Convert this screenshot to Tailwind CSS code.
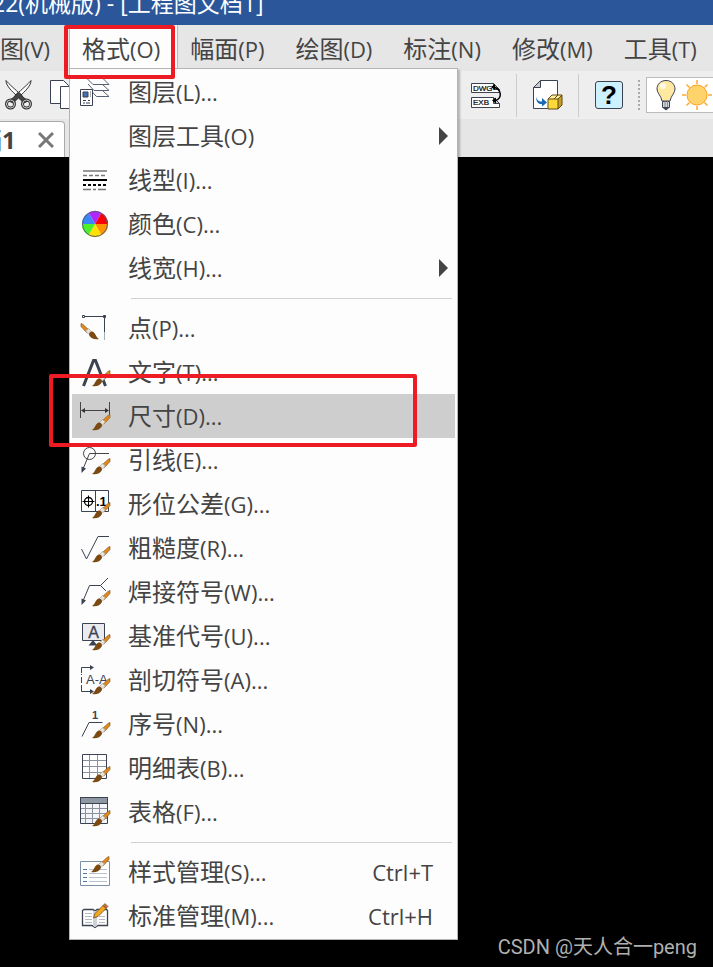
<!DOCTYPE html>
<html lang="zh-CN">
<head>
    <meta charset="UTF-8">
    <meta name="viewport" content="width=device-width, initial-scale=1.0">
    <title>工程图文档1</title>
    <script src="https://cdn.jsdelivr.net/npm/@tailwindcss/browser@4"></script>
</head>
<body class="bg-black">
    <!-- 共用图标 -->
    <svg class="hidden">
        <symbol id="brush" viewBox="0 0 32 32">
            <path d="M21.500 21.500L28 15.500L30 14.500V17.500L24.500 23.500z" fill="#e08a1e" stroke="#8a5a20" stroke-width=".7"/>
            <path d="M19.500 22.500L22.500 19.500L25.500 22L22.500 25z" fill="#e4e4e4" stroke="#a89070" stroke-width=".6"/>
            <path d="M12 30C15 28.500 15 24.500 18.500 22.500C21 22.500 22 24 22 26C20.500 29.500 16 31 12 30z" fill="#7a4a12"/>
        </symbol>
    </svg>

    <div class="relative min-h-screen overflow-hidden font-['Open_Sans','Noto_Sans_CJK_SC',sans-serif] text-2xl leading-8 text-[#444]">
        <!-- 标题栏 -->
        <header class="flex h-[25px] items-end overflow-hidden bg-[#2b579a] text-white">
            <h1 class="-ml-2 whitespace-nowrap pb-1.5 text-[23px]">22(机械版) - [工程图文档1]</h1>
        </header>

        <!-- 菜单栏 -->
        <nav class="flex h-[46px] items-start whitespace-nowrap bg-[#e6e6e6]">
            <button class="-ml-9 h-[46px] shrink-0 pl-3 pr-[19px] pt-0.5">视图<span class="text-[22px]">(V)</span></button>
            <div class="relative shrink-0">
                <button class="h-[46px] border-x border-[#bbb] bg-[#fdfdfd] pl-3 pr-[17px] pt-0.5">格式<span class="text-[22px]">(O)</span></button>

                <!-- 格式下拉菜单 -->
                <ul class="absolute left-0 top-[43px] z-10 w-[389px] border border-[#b4b4b4] bg-[#fdfdfd] px-0.5 py-px shadow-[2px_2px_2px_rgba(0,0,0,0.25)]">
                    <li><button class="flex h-11 w-full items-center gap-4 pl-2 pr-[22px] text-left">
                        <svg class="size-8" viewBox="0 0 32 32" fill="none" stroke="#3b4252">
                            <path d="M7.500 3L13 8.500H29L22.500 2M8 8L14 14.500H29L22.500 8.500M10 13.500L16.500 20.500H29L22.500 14.500" stroke="#596273"/>
                            <path d="M.5 13.500h12v16H.500z" fill="#fff"/>
                            <path d="M3 16h5v5H3z" fill="#3f73b5"/><path d="M10.500 15v6" stroke="#aaa"/>
                            <path d="M3 24.500h3m2 0h2M3 27h2m1 0h4"/>
                        </svg>
                        <span>图层<span class="text-[22px]">(L)...</span></span>
                    </button></li>
                    <li><button class="flex h-11 w-full items-center gap-4 pl-2 pr-[7px] text-left">
                        <span class="size-8"></span>
                        <span>图层工具<span class="text-[22px]">(O)</span></span>
                        <svg class="ml-auto h-[18px] w-[9px]" viewBox="0 0 9 18"><path d="M0 0l9 9l-9 9z" fill="#444"/></svg>
                    </button></li>
                    <li><button class="flex h-11 w-full items-center gap-4 pl-2 pr-[22px] text-left">
                        <svg class="size-8" viewBox="0 0 32 32" fill="none" stroke="#777" stroke-width="1.500">
                            <path d="M3 7h24"/><path d="M3 11.500h24" stroke-dasharray="4 2"/>
                            <path d="M3 16h24" stroke="#000" stroke-width="2"/>
                            <path d="M3 21h24" stroke="#000" stroke-width="2" stroke-dasharray="3 2"/>
                            <path d="M3 25.500h24" stroke-dasharray="8 2 3 2"/>
                        </svg>
                        <span>线型<span class="text-[22px]">(I)...</span></span>
                    </button></li>
                    <li><button class="flex h-11 w-full items-center gap-4 pl-2 pr-[22px] text-left">
                        <svg class="size-8" viewBox="0 0 32 32">
                            <path d="M15 16L8.500 4.700A13 13 0 0 1 21.500 4.700z" fill="#b026ff"/>
                            <path d="M15 16L21.500 4.700A13 13 0 0 1 28 16z" fill="#fb0007"/>
                            <path d="M15 16H28A13 13 0 0 1 21.500 27.300z" fill="#ff9300"/>
                            <path d="M15 16L21.500 27.300A13 13 0 0 1 8.500 27.300z" fill="#ffe100"/>
                            <path d="M15 16L8.500 27.300A13 13 0 0 1 2 16z" fill="#4cf02c"/>
                            <path d="M15 16H2A13 13 0 0 1 8.500 4.700z" fill="#3b86f7"/>
                            <circle cx="15" cy="16" r="12.500" fill="none" stroke="#5a6070"/>
                        </svg>
                        <span>颜色<span class="text-[22px]">(C)...</span></span>
                    </button></li>
                    <li><button class="flex h-11 w-full items-center gap-4 pl-2 pr-[7px] text-left">
                        <span class="size-8"></span>
                        <span>线宽<span class="text-[22px]">(H)...</span></span>
                        <svg class="ml-auto h-[18px] w-[9px]" viewBox="0 0 9 18"><path d="M0 0l9 9l-9 9z" fill="#444"/></svg>
                    </button></li>

                    <li class="flex h-4 items-center pl-[59px] pr-[3px]"><hr class="w-full border-[#d0d0d0]"></li>

                    <li><button class="flex h-11 w-full items-center gap-4 pl-2 pr-[22px] text-left">
                        <svg class="size-8" viewBox="0 0 32 32" fill="none" stroke="#3b4252">
                            <path d="M5 4.500h19.500V20"/><path d="M24.500 20v8" stroke="#a8acb4"/>
                            <path d="M2.500 3.500h2v2h-2z"/><path d="M23.500 3.500h2v2h-2z" fill="#3b4252"/>
                            <g transform="matrix(-1 0 0 1 31 -3)" stroke="none"><use href="#brush" width="32" height="32"/></g>
                        </svg>
                        <span>点<span class="text-[22px]">(P)...</span></span>
                    </button></li>
                    <li><button class="flex h-11 w-full items-center gap-4 pl-2 pr-[22px] text-left">
                        <svg class="size-8" viewBox="0 0 32 32">
                            <path d="M3.500 30L13.500 4.500H15.500L25.500 30M8 20H21" fill="none" stroke="#3b4252" stroke-width="3"/>
                            <use href="#brush" width="32" height="32"/>
                        </svg>
                        <span>文字<span class="text-[22px]">(T)...</span></span>
                    </button></li>
                    <li><button class="flex h-11 w-full items-center gap-4 bg-[#cecece] pl-2 pr-[22px] text-left">
                        <svg class="size-8" viewBox="0 0 32 32">
                            <path d="M.5 2v16M29.500 2v13M2 10.500h26" fill="none" stroke="#444"/>
                            <path d="M1 10.500l4-2.500v5zM29 10.500l-4-2.500v5z" fill="#333"/>
                            <use href="#brush" width="32" height="32"/>
                        </svg>
                        <span>尺寸<span class="text-[22px]">(D)...</span></span>
                    </button></li>
                    <li><button class="flex h-11 w-full items-center gap-4 pl-2 pr-[22px] text-left">
                        <svg class="size-8" viewBox="0 0 32 32">
                            <path d="M29 9.500H9.500L3 25" fill="none" stroke="#444"/>
                            <circle cx="9.500" cy="9.500" r="6" fill="none" stroke="#444"/>
                            <path d="M1.500 29V22.500l4.500 2z" fill="#3b4252"/>
                            <use href="#brush" width="32" height="32"/>
                        </svg>
                        <span>引线<span class="text-[22px]">(E)...</span></span>
                    </button></li>
                    <li><button class="flex h-11 w-full items-center gap-4 pl-2 pr-[22px] text-left">
                        <svg class="size-8" viewBox="0 0 32 32">
                            <path d="M1.500 2.500h27v21h-27zM15.500 2.500v21" fill="#fff" stroke="#3b4252"/>
                            <circle cx="8.500" cy="13.500" r="4" fill="none" stroke="#000" stroke-width="1.300"/>
                            <path d="M2.500 13.500h12M8.500 7.500v12" stroke="#000"/>
                            <text x="16" y="18" font-size="13" font-weight="700" fill="#000" font-family="Liberation Sans">.1</text>
                            <use href="#brush" width="32" height="32"/>
                        </svg>
                        <span>形位公差<span class="text-[22px]">(G)...</span></span>
                    </button></li>
                    <li><button class="flex h-11 w-full items-center gap-4 pl-2 pr-[22px] text-left">
                        <svg class="size-8" viewBox="0 0 32 32">
                            <path d="M1.500 17L6.500 27L18 4.500H29" fill="none" stroke="#3b4252"/>
                            <use href="#brush" width="32" height="32"/>
                        </svg>
                        <span>粗糙度<span class="text-[22px]">(R)...</span></span>
                    </button></li>
                    <li><button class="flex h-11 w-full items-center gap-4 pl-2 pr-[22px] text-left">
                        <svg class="size-8" viewBox="0 0 32 32">
                            <path d="M3 25L9.500 9.500H20.500L28 2M20.500 9.500L26 15" fill="none" stroke="#3b4252"/>
                            <path d="M1.500 29V22.500l4.500 2z" fill="#3b4252"/>
                            <use href="#brush" width="32" height="32"/>
                        </svg>
                        <span>焊接符号<span class="text-[22px]">(W)...</span></span>
                    </button></li>
                    <li><button class="flex h-11 w-full items-center gap-4 pl-2 pr-[22px] text-left">
                        <svg class="size-8" viewBox="0 0 32 32">
                            <path d="M2.500 3.500h22v17h-22z" fill="#e9ebef" stroke="#3b4252"/>
                            <text x="13.500" y="18" text-anchor="middle" font-size="16" fill="#3b4252" stroke="#3b4252" stroke-width=".3" font-family="Liberation Sans">A</text>
                            <path d="M13 20l4.500 5.500h-9z" fill="#3b4252"/>
                            <use href="#brush" width="32" height="32"/>
                        </svg>
                        <span>基准代号<span class="text-[22px]">(U)...</span></span>
                    </button></li>
                    <li><button class="flex h-11 w-full items-center gap-4 pl-2 pr-[22px] text-left">
                        <svg class="size-8" viewBox="0 0 32 32">
                            <path d="M11 3.500H1.500V9M1.500 22v5.500H11" fill="none" stroke="#3b4252"/>
                            <path d="M1.500 10v12" stroke="#3b4252" stroke-dasharray="1 2 6 2"/>
                            <path d="M14 3.500l-4-2.500v5zM14 27.500l-4-2.500v5z" fill="#3b4252"/>
                            <text x="6" y="20" font-size="13" fill="#3b4252" font-family="Liberation Sans">A-A</text>
                            <use href="#brush" width="32" height="32"/>
                        </svg>
                        <span>剖切符号<span class="text-[22px]">(A)...</span></span>
                    </button></li>
                    <li><button class="flex h-11 w-full items-center gap-4 pl-2 pr-[22px] text-left">
                        <svg class="size-8" viewBox="0 0 32 32">
                            <path d="M2 28.500L9 14.500H22.500" fill="none" stroke="#3b4252"/>
                            <text x="15" y="11" text-anchor="middle" font-size="11" font-weight="700" fill="#3b4252" font-family="Liberation Sans">1</text>
                            <use href="#brush" width="32" height="32"/>
                        </svg>
                        <span>序号<span class="text-[22px]">(N)...</span></span>
                    </button></li>
                    <li><button class="flex h-11 w-full items-center gap-4 pl-2 pr-[22px] text-left">
                        <svg class="size-8" viewBox="0 0 32 32">
                            <path d="M2.500 2.500h24v24h-24z" fill="#fff"/>
                            <path d="M2.500 8.500h24M2.500 14.500h24M2.500 20.500h24M9.500 2.500v24M17.500 2.500v24" stroke="#8c929c"/>
                            <path d="M2.500 2.500h24v24h-24z" fill="none" stroke="#3b4252"/>
                            <use href="#brush" width="32" height="32"/>
                        </svg>
                        <span>明细表<span class="text-[22px]">(B)...</span></span>
                    </button></li>
                    <li><button class="flex h-11 w-full items-center gap-4 pl-2 pr-[22px] text-left">
                        <svg class="size-8" viewBox="0 0 32 32">
                            <path d="M.5 1.500h27v26H.500z" fill="#f3f5f8"/>
                            <path d="M1 12.500h26M1 17.500h26M1 22.500h26M5.500 7v20M12.500 7v20M19.500 7v20" stroke="#8c929c"/>
                            <path d="M.5 1.500h27v6H.500z" fill="#8f97a3" stroke="#3b4252"/>
                            <path d="M.5 1.500h27v26H.500z" fill="none" stroke="#3b4252"/>
                            <use href="#brush" width="32" height="32"/>
                        </svg>
                        <span>表格<span class="text-[22px]">(F)...</span></span>
                    </button></li>

                    <li class="flex h-4 items-center pl-[59px] pr-[3px]"><hr class="w-full border-[#d0d0d0]"></li>

                    <li><button class="flex h-11 w-full items-center gap-4 pl-2 pr-[22px] text-left">
                        <svg class="size-8 overflow-visible" viewBox="0 0 32 32">
                            <path d="M.5 5.500h29v24H.500z" fill="#fff" stroke="#7d90a5"/>
                            <path d="M3 13.500h4M3 17.500h4M3 21.500h4M3 25.500h4" stroke="#4f78a0"/>
                            <path d="M9 13.500h18M9 17.500h18M9 21.500h18M9 25.500h18" stroke="#b9c3d0"/>
                            <g transform="translate(-1 -14)"><use href="#brush" width="32" height="32"/></g>
                        </svg>
                        <span>样式管理<span class="text-[22px]">(S)...</span></span>
                        <span class="ml-auto text-[22px]">Ctrl+T</span>
                    </button></li>
                    <li><button class="flex h-11 w-full items-center gap-4 pl-2 pr-[22px] text-left">
                        <svg class="size-8" viewBox="0 0 32 32">
                            <path d="M2.500 10.500L4 9.500H13L15 11L17 9.500H26.500L27.500 10.500V25.500H18L15 27.500L12 25.500H2.500z" fill="#fff" stroke="#3b4252" stroke-width="1.300"/>
                            <path d="M13 11h4v15l-2 1l-2-1z" fill="#cfd2d8"/>
                            <path d="M5 13.500h7M5 16.500h7M5 19.500h7M5 22.500h7M19 16.500h6M19 19.500h6M19 22.500h6" stroke="#b5bac2"/>
                            <path d="M13.500 18L15 13.500L23 5.500L26 8.500L18 16.500z" fill="#f5a81c" stroke="#6b4a22" stroke-width=".8"/>
                            <path d="M23 5.500L25 3.500L28 6.500L26 8.500z" fill="#c96a3a" stroke="#6b4a22" stroke-width=".6"/>
                        </svg>
                        <span>标准管理<span class="text-[22px]">(M)...</span></span>
                        <span class="ml-auto text-[22px]">Ctrl+H</span>
                    </button></li>
                </ul>

                <!-- 红色标注框 -->
                <div class="absolute -left-[5px] top-0 z-20 h-[54px] w-[111px] rounded-xs border-4 border-[#ed1c24]"></div>
                <div class="absolute -left-5 top-[349px] z-20 h-[73px] w-[368px] rounded-xs border-4 border-[#ed1c24]"></div>
            </div>
            <button class="h-[46px] shrink-0 pl-3 pr-[19px] pt-0.5">幅面<span class="text-[22px]">(P)</span></button>
            <button class="h-[46px] shrink-0 pl-3 pr-[19px] pt-0.5">绘图<span class="text-[22px]">(D)</span></button>
            <button class="h-[46px] shrink-0 pl-3 pr-[19px] pt-0.5">标注<span class="text-[22px]">(N)</span></button>
            <button class="h-[46px] shrink-0 pl-3 pr-[19px] pt-0.5">修改<span class="text-[22px]">(M)</span></button>
            <button class="h-[46px] shrink-0 pl-3 pr-[19px] pt-0.5">工具<span class="text-[22px]">(T)</span></button>
        </nav>

        <!-- 工具栏 -->
        <div class="flex h-12 items-center overflow-hidden bg-[#eee]">
            <button class="ml-1 shrink-0" aria-label="剪切">
                <svg class="size-8" viewBox="0 0 32 32" stroke="#333">
                    <path d="M2 1.500C2 6 6 11 16 19.500L18 16.500C10 9.500 5 5 2 1.500zM27 1.500C27 6 23 11 13 19.500L11 16.500C19 9.500 24 5 27 1.500z" fill="#fff"/>
                    <path d="M14.500 13L19 18L24 22L20 24L14.500 19L9 24L5 22L10 18z" fill="#444"/>
                    <circle cx="6.500" cy="25" r="4" fill="none" stroke-width="3"/><circle cx="22.500" cy="25" r="4" fill="none" stroke-width="3"/>
                    <circle cx="6.500" cy="25" r="4" fill="none" stroke="#ccc"/><circle cx="22.500" cy="25" r="4" fill="none" stroke="#ccc"/>
                </svg>
            </button>
            <button class="ml-3.5 shrink-0" aria-label="复制">
                <svg class="size-8" viewBox="0 0 32 32" fill="#fff" stroke="#3b4252">
                    <path d="M.5 1.500h13l5 5v18H.500z"/><path d="M10.500 7.500h14l4 4v18h-18z"/>
                </svg>
            </button>
            <button class="ml-[388px] shrink-0" aria-label="DWG/EXB 转换">
                <svg class="size-8" viewBox="0 0 32 32">
                    <path d="M1.500 4.500h22l6 6v3h-28zM1.500 18.500h22l6 6v4h-28z" fill="#fff" stroke="#3b4252"/>
                    <path d="M23.500 4.500v6h6zM23.500 18.500v6h6z" fill="#ccc" stroke="#3b4252"/>
                    <text x="3" y="12" font-size="8" fill="#000" stroke="#000" stroke-width=".2" font-family="Liberation Sans">DWG</text>
                    <text x="3" y="26" font-size="8" fill="#000" stroke="#000" stroke-width=".2" font-family="Liberation Sans">EXB</text>
                    <path d="M24 8C32 11 32 19 26 21.500" fill="none" stroke="#000" stroke-width="1.500"/>
                    <path d="M21 8l4-3v6zM22 21.500l4-3v6z" fill="#000"/>
                </svg>
            </button>
            <div class="ml-3.5 h-[43px] w-px shrink-0 bg-[#ccc]"></div>
            <button class="ml-[15px] shrink-0" aria-label="插入部件">
                <svg class="size-8" viewBox="0 0 32 32">
                    <path d="M8.500 1.500h17v28h-24v-21z" fill="#fff" stroke="#3b4252"/>
                    <path d="M8.500 1.500v7h-7z" fill="#ccc" stroke="#3b4252"/>
                    <path d="M4 18C5 22 8 23 10 22.500V19L15 23.500L10 27.500V25C6 25.500 4 22 4 18z" fill="#1769b8"/>
                    <path d="M16 20l4-4h10l-4 4z" fill="#fff09a"/><path d="M26 20l4-4v10l-4 4z" fill="#c8a020"/><path d="M16 20h10v10H16z" fill="#ffd93b"/>
                    <path d="M16 20l4-4h10v10l-4 4H16zM16 20h10v10M26 20l4-4M22 20l4-4" fill="none" stroke="#5c4a18"/>
                </svg>
            </button>
            <div class="ml-3.5 h-[43px] w-px shrink-0 bg-[#ccc]"></div>
            <button class="ml-4 flex size-7 shrink-0 items-center justify-center rounded-[3px] border border-[#3b4252] bg-[#cdf1ff] font-['Liberation_Sans',sans-serif] text-[26px] font-bold leading-7 text-black">?</button>
            <div class="ml-[15px] h-[30px] shrink-0 border-l-2 border-dotted border-[#aaa]"></div>
            <div class="ml-1.5 flex h-9 w-40 shrink-0 items-center border border-[#bbb] bg-white pl-2">
                <svg class="h-8 w-[22px] shrink-0" viewBox="0 0 22 32">
                    <path d="M11 1.500C5.500 1.500 2 5.500 2 10C2 14 6 16.500 7 22H15C16 16.500 20 14 20 10C20 5.500 16.500 1.500 11 1.500z" fill="#ffe9a0" stroke="#3b4252"/>
                    <circle cx="8" cy="7" r="3" fill="#fffbe8"/>
                    <path d="M7.500 22.500h7v6h-7z" fill="#d5d8dc" stroke="#3b4252"/><path d="M10 22v6M12.500 22v6" stroke="#888"/><path d="M8 28.500h6l-3 2.500z" fill="#3b4252" stroke="#3b4252"/>
                </svg>
                <svg class="ml-[5px] size-8 shrink-0" viewBox="0 0 32 32">
                    <circle cx="15" cy="16" r="10" fill="#ffd36b" stroke="#ffa01e"/>
                    <path d="M15 1v4M15 27v4M0 16h4M26 16h4M4.500 5.500l3 3M22.500 23.500l3 3M4.500 26.500l3-3M22.500 8.500l3-3" stroke="#ffab33" stroke-width="1.500"/>
                </svg>
            </div>
        </div>

        <!-- 文档标签 -->
        <div class="flex h-[38px] items-end bg-[#e6e6e6]">
            <div class="flex h-9 w-[65px] items-center justify-between overflow-hidden rounded-tr-sm border-r border-t border-[#aaa] bg-white pr-2.5 font-bold">
                <span class="-ml-[22px] shrink-0">档1</span>
                <button aria-label="关闭" class="shrink-0"><svg class="size-4" viewBox="0 0 16 16"><path d="M1 1l14 14M15 1L1 15" stroke="#777" stroke-width="3"/></svg></button>
            </div>
        </div>

        <!-- 水印 -->
        <p class="absolute bottom-1 right-4 font-['Roboto','Noto_Sans_CJK_SC',sans-serif] text-xl/8 text-[#b0b0b0]">CSDN @天人合一peng</p>
    </div>
</body>
</html>
